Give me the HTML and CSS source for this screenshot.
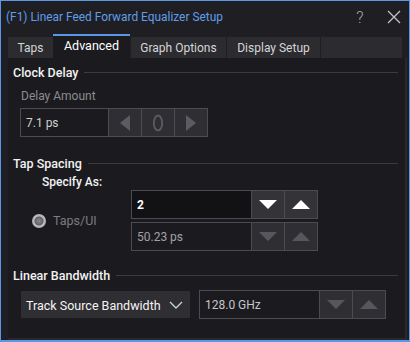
FILE: index.html
```html
<!DOCTYPE html>
<html>
<head>
<meta charset="utf-8">
<link rel="stylesheet" href="styles.css">
</head>
<body>
<div class="window">
  <div class="titlebar">
    <span class="title">(F1) Linear Feed Forward Equalizer Setup</span>
    <span class="help">?</span>
    <span class="close"><svg width="14" height="14" viewBox="0 0 14 14"><path d="M1 1L13 13M13 1L1 13" stroke="#c4c4c4" stroke-width="1.3" fill="none"/></svg></span>
  </div>
  <div class="tabs">
    <div class="tab tab-taps">Taps</div>
    <div class="tab tab-adv active">Advanced</div>
    <div class="tab tab-graph">Graph Options</div>
    <div class="tab tab-disp">Display Setup</div>
    <div class="tab tab-empty"></div>
  </div>
  <div class="panel">
    <div class="group-head head-clock"><span>Clock Delay</span><i class="rule"></i></div>
    <div class="sub-label">Delay Amount</div>
    <div class="spin spin-delay disabled">
      <div class="field">7.1 ps</div>
      <div class="btn"><svg width="12" height="16" viewBox="0 0 12 16"><path d="M11 0L1 8L11 16Z" fill="#5b5b61"/></svg></div>
      <div class="btn"><svg width="12" height="18" viewBox="0 0 12 18"><ellipse cx="6" cy="9" rx="4.2" ry="7.5" stroke="#5b5b61" stroke-width="1.8" fill="none"/></svg></div>
      <div class="btn"><svg width="12" height="16" viewBox="0 0 12 16"><path d="M1 0L11 8L1 16Z" fill="#5b5b61"/></svg></div>
    </div>

    <div class="group-head head-tap"><span>Tap Spacing</span><i class="rule"></i></div>
    <div class="specify">Specify As:</div>
    <div class="tap-row">
      <div class="radio-wrap"><span class="radio"></span><span class="radio-label">Taps/UI</span></div>
      <div class="spins">
        <div class="spin spin-taps">
          <div class="field field-active">2</div>
          <div class="btn"><svg width="18" height="9" viewBox="0 0 18 9"><path d="M0 0H18L9 9Z" fill="#ffffff"/></svg></div>
          <div class="btn"><svg width="18" height="9" viewBox="0 0 18 9"><path d="M0 9H18L9 0Z" fill="#ffffff"/></svg></div>
        </div>
        <div class="spin spin-ps disabled">
          <div class="field">50.23 ps</div>
          <div class="btn"><svg width="18" height="9" viewBox="0 0 18 9"><path d="M0 0H18L9 9Z" fill="#56565c"/></svg></div>
          <div class="btn"><svg width="18" height="9" viewBox="0 0 18 9"><path d="M0 9H18L9 0Z" fill="#56565c"/></svg></div>
        </div>
      </div>
    </div>

    <div class="group-head head-bw"><span>Linear Bandwidth</span><i class="rule"></i></div>
    <div class="bw-row">
      <div class="dropdown"><span>Track Source Bandwidth</span><svg width="14" height="8" viewBox="0 0 14 8"><path d="M1 1L7 7L13 1" stroke="#cfcfcf" stroke-width="1.4" fill="none"/></svg></div>
      <div class="spin spin-bw disabled">
        <div class="field">128.0 GHz</div>
        <div class="btn"><svg width="18" height="9" viewBox="0 0 18 9"><path d="M0 0H18L9 9Z" fill="#56565c"/></svg></div>
        <div class="btn"><svg width="18" height="9" viewBox="0 0 18 9"><path d="M0 9H18L9 0Z" fill="#56565c"/></svg></div>
      </div>
    </div>
  </div>
</div>
</body>
</html>
```
FILE: styles.css
```css
* { box-sizing: border-box; }
html, body { margin: 0; padding: 0; background: #1c1c20; }
body { font-family: Roboto, "Liberation Sans", sans-serif; font-size: 12px; }

.window {
  width: 410px;
  height: 342px;
  border: 1px solid #5a97e6;
  border-bottom-width: 2px;
  background: #1f1f23;
  display: flex;
  flex-direction: column;
  overflow: hidden;
}

.titlebar {
  height: 33px;
  display: flex;
  align-items: center;
  padding-left: 5px;
  flex: none;
}
.title { color: #5f9de9; font-size: 11.9px; flex: 1; padding-bottom: 1px; }
.help { color: #a8a8a8; font-size: 16px; font-weight: 300; width: 20px; margin-right: 17px; text-align: center; }
.close { width: 14px; height: 14px; margin-right: 8px; display: flex; margin-bottom: 1px; }

.tabs {
  display: flex;
  align-items: flex-end;
  height: 24px;
  margin: 0 5px 0 7px;
  gap: 1px;
  flex: none;
}
.tab {
  height: 21px;
  background: #2b2b30;
  color: #d6d6d6;
  display: flex;
  align-items: center;
  justify-content: center;
  padding-top: 1px;
}
.tab.active {
  height: 24px;
  background: #1b1b1f;
  color: #ffffff;
  border-top: 2px solid #5a97e6;
  padding-top: 0;
  padding-bottom: 3px;
  font-size: 12.5px;
}
.tab-taps { width: 45px; }
.tab-adv { width: 77px; margin-left: -1px; }
.tab-graph { width: 95px; }
.tab-disp { width: 93px; }
.tab-empty { width: 81px; }

.panel {
  flex: 1;
  background: #1b1b1f;
  margin: 0 2px 0 7px;
  padding: 0 7px 0 5px;
  border-right: 2px solid #29292d;
  border-bottom: 2px solid #29292d;
  display: flex;
  flex-direction: column;
}

.group-head {
  display: flex;
  align-items: center;
  height: 14px;
  color: #f2f2f2;
  font-weight: 500;
  font-size: 12.5px;
}
.group-head .rule { flex: 1; height: 1px; background: #3b3b40; margin-left: 6px; margin-top: 1px; }
.head-clock { margin-top: 7px; }
.head-tap { margin-top: 19px; }
.head-bw { margin-top: 17px; }

.sub-label { color: #8b8b8f; margin: 10px 0 0 8px; height: 14px; line-height: 14px; }

.spin {
  display: flex;
  height: 29px;
  width: 188px;
  border: 1px solid #4b4b51;
  background: #2e2e33;
}
.spin .field {
  flex: 1;
  display: flex;
  align-items: center;
  padding-left: 5px;
  background: #1b1b1f;
  color: #d0d0d0;
  padding-top: 1px;
}
.spin .btn {
  width: 33px;
  border-left: 1px solid #4b4b51;
  display: flex;
  align-items: center;
  justify-content: center;
}
.spin-delay { margin: 5px 0 0 7px; }

.specify { color: #f2f2f2; font-weight: 500; margin: 5px 0 0 29px; height: 14px; line-height: 14px; }

.tap-row { display: flex; align-items: center; margin-top: 1px; }
.radio-wrap { display: flex; align-items: center; width: 118px; padding-left: 19px; }
.radio {
  width: 14px; height: 14px; border-radius: 50%;
  background: radial-gradient(circle at 50% 50%, #8a8a8e 0, #6e6e72 3px, #5e5e62 4px, #bdbdbd 5px, #b0b0b0 7px);
}
.radio-label { color: #7c7c80; margin-left: 7px; font-size: 12.5px; }
.spins { display: flex; flex-direction: column; gap: 3px; }
.spin-taps, .spin-ps { width: 187px; }
.spin-taps .field { background: #121215; color: #ffffff; font-weight: 700; }
.spin-taps .btn { background: #333338; }
.spin-ps .field { color: #a2a2a6; }

.bw-row { display: flex; align-items: center; margin: 8px 0 0 8px; gap: 9px; }
.dropdown {
  width: 169px; height: 27px;
  background: #2e2e33;
  display: flex; align-items: center; justify-content: space-between;
  padding: 1px 7px 0 5px;
  color: #f4f4f4;
  font-size: 12.5px;
}
.spin-bw { width: 187px; }
.spin-bw .field { color: #c6c6ca; }
```
